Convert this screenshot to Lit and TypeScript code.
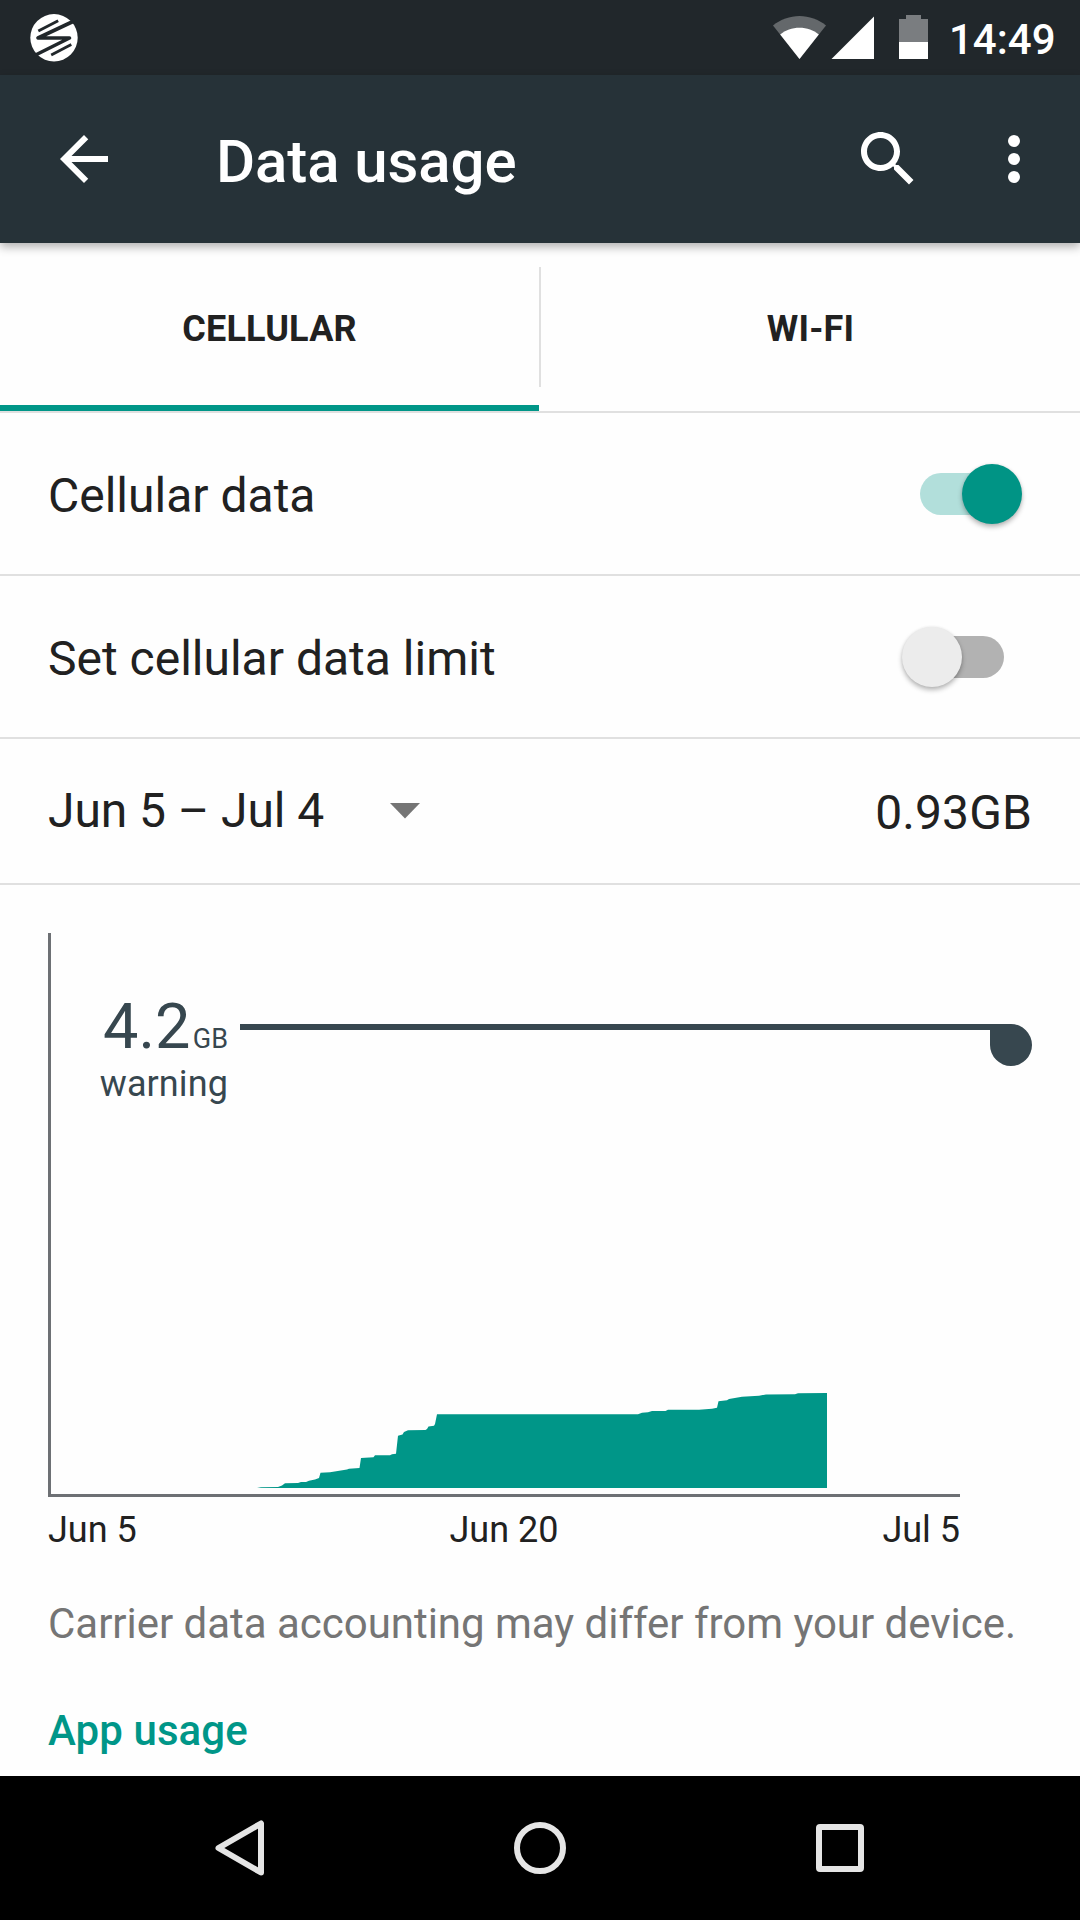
import { LitElement, html, css, svg } from "lit";
import { customElement, property } from "lit/decorators.js";

@customElement("data-switch")
class DataSwitch extends LitElement {
  @property({ type: Boolean, reflect: true }) on = false;
  static styles = css`
    :host { display: grid; width: 120px; height: 61px; align-items: center; }
    .track, .thumb { grid-area: 1 / 1; }
    .track { width: 84px; height: 42px; border-radius: 21px; background: #b2b2b2; justify-self: center; }
    .thumb {
      width: 60px; height: 60px; border-radius: 50%; background: #ececec; justify-self: start;
      box-shadow: 0 3px 5px rgba(0, 0, 0, 0.28), 0 0 3px rgba(0, 0, 0, 0.08);
    }
    :host([on]) .track { background: #b2dfdb; }
    :host([on]) .thumb { background: #009485; justify-self: end; }
  `;
  render() {
    return html`<div class="track"></div><div class="thumb"></div>`;
  }
}

// Cumulative usage outline, in chart pixels.
const USAGE: [number, number][] = [
  [257, 1488], [261, 1487.2], [278, 1487], [282, 1485.5], [285, 1483.3], [298, 1483], [301, 1482], [306, 1482],
  [309, 1480.7], [315, 1479.5], [319, 1478], [320.5, 1472.7], [330, 1472.3], [347, 1469.5], [349, 1468.7],
  [359.5, 1468], [361, 1458], [373.5, 1457.3], [375, 1455.3], [390, 1455.3], [392, 1454.3], [396, 1453.7],
  [398, 1435.7], [402.5, 1434.5], [404, 1432], [408, 1430.3], [425.5, 1430], [427, 1429], [428.5, 1426.5],
  [434, 1425.7], [435, 1424], [437, 1414.2], [638, 1414.2], [642, 1412.8], [648, 1412.3], [652, 1411],
  [665.5, 1411], [668, 1409.8], [699, 1409.7], [712, 1408.7], [717, 1407.7], [718.5, 1401.3], [727, 1400.3],
  [729, 1399], [742, 1396.7], [759, 1395.7], [766, 1394.5], [795, 1394.3], [798, 1393.3], [827, 1393],
  [827, 1488],
];

@customElement("app-root")
class AppRoot extends LitElement {
  static styles = css`
    :host {
      display: flex; flex-direction: column; width: 1080px; height: 1920px; overflow: hidden;
      background: #fefefe; color: #212121; font-family: Roboto, sans-serif; font-size: 48px; line-height: 56px;
    }
    svg { display: block; flex: none; }
    .status { height: 75px; background: #21272b; color: #fff; display: flex; justify-content: space-between; flex: none; }
    .status-right { display: flex; }
    .clock { font-size: 42px; font-weight: 500; line-height: 50px; padding-top: 15px; width: 131px; }
    .bar {
      height: 168px; box-sizing: border-box; background: #263238; color: #fff; display: flex; align-items: center; padding: 0 30px 0 48px;
      box-shadow: 0 4px 9px rgba(0, 0, 0, 0.3); flex: none; z-index: 1;
    }
    .title { flex: 1; font-size: 60px; font-weight: 500; line-height: 70px; padding: 5px 0 0 96px; letter-spacing: -0.1px; }
    .more { margin-left: 54px; }
    .tabs { height: 168px; display: grid; grid-template-columns: 539px 2px 539px; border-bottom: 2px solid #e0e0e0; flex: none; }
    .tab { display: flex; align-items: center; justify-content: center; font-size: 36px; font-weight: 700; line-height: 42px; border-bottom: 6px solid transparent; padding-top: 10px; letter-spacing: 0.2px; }
    .tab.active { border-bottom-color: #009688; }
    .sep { background: #e0e0e0; height: 120px; margin-top: 24px; }
    .row { height: 161px; display: flex; align-items: center; justify-content: space-between; padding: 0 58px 0 48px; border-bottom: 2px solid #e0e0e0; flex: none; }
    .row .label { padding-top: 5px; }
    .row.cycle { height: 144px; padding-right: 48px; }
    .period { display: flex; align-items: center; gap: 66px; letter-spacing: -0.08px; }
    .total { padding-top: 4px; letter-spacing: 0.1px; }
    .chart { height: 612px; flex: none; }
    .axis { margin: 0 120px 0 48px; display: grid; grid-template-columns: 1fr 1fr 1fr; font-size: 36px; line-height: 42px; padding-top: 12px; flex: none; }
    .mid { text-align: center; }
    .end { text-align: right; }
    .note { color: #757575; font-size: 42px; line-height: 50px; padding: 48px 0 0 48px; white-space: nowrap; letter-spacing: -0.025px; }
    .section { color: #009688; font-weight: 500; font-size: 42px; line-height: 50px; padding: 57px 0 0 48px; flex: 1; letter-spacing: 0.08px; }
    .nav { height: 144px; background: #000; flex: none; }
    .ink { fill: #37474f; font-family: Roboto, sans-serif; }
    .caption { letter-spacing: 0.1px; }
  `;

  private chart() {
    const points = USAGE.map(([x, y]) => `${x},${y}`).join(" ");
    return html`<svg class="chart" width="1080" height="612" viewBox="0 885 1080 612">
      <rect x="48" y="933" width="3" height="564" fill="#6d7074"></rect>
      <rect x="48" y="1494" width="912" height="3" fill="#6d7074"></rect>
      ${svg`<polygon points=${points} fill="#009688"></polygon>`}
      <text class="ink" x="103" y="1048" font-size="63">4.2</text>
      <text class="ink" x="228" y="1048" font-size="27" text-anchor="end">GB</text>
      <text class="ink caption" x="228" y="1096" font-size="36" text-anchor="end">warning</text>
      <path class="ink" d="M240 1024H1011a21 21 0 1 1-21 21V1030H240z"></path>
    </svg>`;
  }

  render() {
    return html`
      <div class="status">
        <svg width="100" height="75" viewBox="0 0 100 75">
          <circle cx="54" cy="37.800" r="23.700" fill="#fff"></circle>
          <g stroke="#21272b" fill="none" stroke-width="2.800">
            <path d="M38.300 31L58.200 20.700"></path>
            <path d="M51.200 55L71.300 44.600"></path>
            <path d="M73 21.500L38 38H69.500L35.500 55" stroke-width="3.600" stroke-linejoin="round"></path>
          </g>
        </svg>
        <div class="status-right">
          <svg width="179" height="75" viewBox="770 0 179 75">
            <path d="M799.5 59L773 25.5C780.5 19.5 790 16 799.5 16S818.500 19.5 826 25.500z" fill="#64686b"></path>
            <path d="M799.5 59L780.2 34.500C785.5 30 792 27.700 799.500 27.700S813.500 30 818.800 34.500z" fill="#fff"></path>
            <path d="M831.5 59H874V16.500z" fill="#fff"></path>
            <path d="M899 42V19H906V15H921V19H928V42z" fill="#7a7d80"></path>
            <path d="M899 42H928V59H899z" fill="#fff"></path>
          </svg>
          <div class="clock">14:49</div>
        </div>
      </div>
      <div class="bar">
        <svg width="72" height="72" viewBox="0 0 24 24" fill="#fff"><path d="M20 11H7.830l5.590-5.590L12 4l-8 8 8 8 1.410-1.410L7.830 13H20v-2z"></path></svg>
        <div class="title">Data usage</div>
        <svg width="72" height="72" viewBox="0 0 24 24" fill="#fff"><path d="M15.500 14h-.79l-.28-.27C15.410 12.590 16 11.110 16 9.500 16 5.910 13.090 3 9.500 3S3 5.910 3 9.500 5.910 16 9.500 16c1.610 0 3.090-.59 4.230-1.570l.27.28v.79l5 4.990L20.490 19l-4.990-5zm-6 0C7.010 14 5 11.990 5 9.500S7.010 5 9.500 5 14 7.010 14 9.500 11.990 14 9.500 14z"></path></svg>
        <svg class="more" width="72" height="72" viewBox="0 0 24 24" fill="#fff"><circle cx="12" cy="6" r="2"></circle><circle cx="12" cy="12" r="2"></circle><circle cx="12" cy="18" r="2"></circle></svg>
      </div>
      <div class="tabs">
        <div class="tab active">CELLULAR</div>
        <div class="sep"></div>
        <div class="tab">WI-FI</div>
      </div>
      <div class="row"><span class="label">Cellular data</span><data-switch on></data-switch></div>
      <div class="row"><span class="label">Set cellular data limit</span><data-switch></data-switch></div>
      <div class="row cycle">
        <div class="period">
          <span>Jun 5 – Jul 4</span>
          <svg width="30" height="16" viewBox="0 0 30 16"><path d="M0 0H30L15 15.500z" fill="#757575"></path></svg>
        </div>
        <span class="total">0.93GB</span>
      </div>
      ${this.chart()}
      <div class="axis"><span>Jun 5</span><span class="mid">Jun 20</span><span class="end">Jul 5</span></div>
      <div class="note">Carrier data accounting may differ from your device.</div>
      <div class="section">App usage</div>
      <svg class="nav" width="1080" height="144" viewBox="0 1776 1080 144" fill="none" stroke="#e5e5e5" stroke-width="6" stroke-linejoin="round">
        <path d="M218.500 1848L261 1823.500V1872.500z"></path>
        <circle cx="540" cy="1848" r="23"></circle>
        <rect x="819" y="1827" width="42" height="42" rx="1"></rect>
      </svg>
    `;
  }
}
